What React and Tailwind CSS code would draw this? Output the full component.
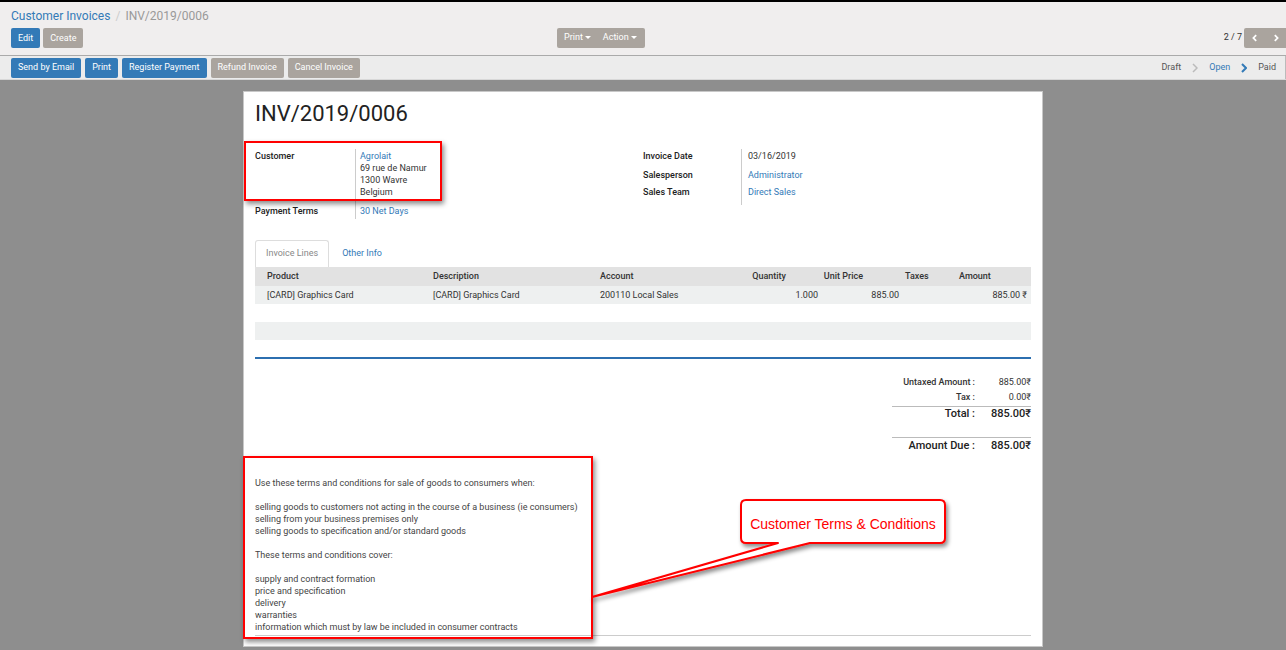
import React from 'react'

const font = { fontFamily: 'Roboto, "Liberation Sans", sans-serif' }

function Btn({ children, primary }) {
  return (
    <button
      className={
        'h-[20px] px-[7px] rounded-[2px] text-[9px] leading-none text-white ' +
        (primary ? 'bg-[#337ab7]' : 'bg-[#aaa49e]')
      }
    >
      {children}
    </button>
  )
}

function Caret() {
  return <span className="inline-block ml-[2px] align-middle border-t-[3px] border-x-[3px] border-x-transparent border-t-white" />
}

function Field({ label, children, className = '' }) {
  return (
    <div className={'flex ' + className}>
      <div className="w-[100px] shrink-0 text-[9px] leading-[12px] font-medium text-[#222]">{label}</div>
      <div className="pl-[5px] text-[9px] leading-[12px] text-[#333]">{children}</div>
    </div>
  )
}

const terms = [
  'Use these terms and conditions for sale of goods to consumers when:',
  '',
  'selling goods to customers not acting in the course of a business (ie consumers)',
  'selling from your business premises only',
  'selling goods to specification and/or standard goods',
  '',
  'These terms and conditions cover:',
  '',
  'supply and contract formation',
  'price and specification',
  'delivery',
  'warranties',
  'information which must by law be included in consumer contracts',
]

export default function App() {
  return (
    <div className="relative w-[1286px] h-[650px] overflow-hidden bg-[#8e8e8e]" style={font}>
      {/* control panel */}
      <div className="border-t-2 border-black bg-[#f0eeee]">
        <div className="px-[11px] pt-[6px] h-[26px] text-[12px] leading-[16px]">
          <span className="text-[#337ab7]">Customer Invoices</span>
          <span className="text-[#ccc] mx-[5px]">/</span>
          <span className="text-[#999]">INV/2019/0006</span>
        </div>
        <div className="flex items-center px-[11px] h-[20px]">
          <div className="flex gap-[3px] w-[546px]">
            <Btn primary>Edit</Btn>
            <Btn>Create</Btn>
          </div>
          <div className="flex h-[20px] rounded-[2px] bg-[#aaa49e] text-[9px] text-white items-center">
            <span className="pl-[7px] pr-[6px]">Print<Caret /></span>
            <span className="px-[6px] pr-[8px]">Action<Caret /></span>
          </div>
          <div className="flex-1" />
          <span className="text-[9px] text-[#333] mr-[2px]">2 / 7</span>
          <div className="flex h-[20px] w-[42px] -mr-[11px] rounded-l-[2px] bg-[#aaa49e] items-center justify-around text-white">
            <svg width="8" height="8" viewBox="0 0 10 10"><path d="M6.5 1.5 3 5l3.5 3.5" fill="none" stroke="white" strokeWidth="2.2" /></svg>
            <svg width="8" height="8" viewBox="0 0 10 10"><path d="M3.5 1.5 7 5 3.5 8.5" fill="none" stroke="white" strokeWidth="2.2" /></svg>
          </div>
        </div>
        <div className="h-[7px]" />
      </div>
      <div className="h-[25px] border-t border-[#aaa] border-b border-b-[#d8d8d8] bg-[#ececec] flex items-center pl-[11px]">
        <div className="flex gap-[4px]">
          <Btn primary>Send by Email</Btn>
          <Btn primary>Print</Btn>
          <Btn primary>Register Payment</Btn>
          <Btn>Refund Invoice</Btn>
          <Btn>Cancel Invoice</Btn>
        </div>
        <div className="flex-1" />
        <div className="flex items-center h-full text-[9px] border-r border-[#bbb] pr-[9px]">
          <span className="text-[#555]">Draft</span>
          <svg className="mx-[11px]" width="6" height="10" viewBox="0 0 6 10"><path d="M1 1l4 4-4 4" fill="none" stroke="#bbb" strokeWidth="1.5" /></svg>
          <span className="text-[#337ab7]">Open</span>
          <svg className="mx-[11px]" width="6" height="10" viewBox="0 0 6 10"><path d="M1 1l4 4-4 4" fill="none" stroke="#337ab7" strokeWidth="2" /></svg>
          <span className="text-[#555]">Paid</span>
        </div>
      </div>

      {/* sheet */}
      <div className="pt-[11px] flex justify-center">
        <div className="w-[800px] bg-white border border-[#c8c8c8] px-[11px] pt-[10px] pb-[10px]">
          <h1 className="text-[22px] leading-[24px] text-[#222]">INV/2019/0006</h1>

          <div className="grid grid-cols-2 mt-[23px]">
            <div className="relative">
              <div className="absolute left-[100px] top-0 h-[70px] border-l border-[#ccc]" />
              <Field label="Customer" className="pt-[1px]">
                <div className="text-[#337ab7]">Agrolait</div>
                <div>69 rue de Namur</div>
                <div>1300 Wavre</div>
                <div>Belgium</div>
              </Field>
              <Field label="Payment Terms" className="mt-[7px]">
                <span className="text-[#337ab7]">30 Net Days</span>
              </Field>
            </div>
            <div className="relative">
              <div className="absolute left-[98px] top-0 h-[56px] border-l border-[#ccc]" />
              <Field label="Invoice Date" className="pt-[1px]">03/16/2019</Field>
              <Field label="Salesperson" className="mt-[7px]">
                <span className="text-[#337ab7]">Administrator</span>
              </Field>
              <Field label="Sales Team" className="mt-[5px]">
                <span className="text-[#337ab7]">Direct Sales</span>
              </Field>
            </div>
          </div>

          {/* tabs */}
          <div className="mt-[23px] flex text-[9px] h-[27px]">
            <div className="px-[10px] border border-b-0 border-[#ddd] rounded-t-[3px] text-[#888] flex items-center">Invoice Lines</div>
            <div className="px-[13px] text-[#337ab7] flex items-center">Other Info</div>
          </div>
          <div className="text-[9px] leading-[18px] whitespace-nowrap">
            <div className="grid grid-cols-[178px_167px_140px_82px_81px_52px_1fr] bg-[#e2e2e2] font-medium text-[#333] h-[19px]">
              <div className="pl-[12px]">Product</div>
              <div>Description</div>
              <div>Account</div>
              <div className="text-right pr-[36px]">Quantity</div>
              <div className="text-right pr-[40px]">Unit Price</div>
              <div className="pl-[2px]">Taxes</div>
              <div className="pl-[4px]">Amount</div>
            </div>
            <div className="grid grid-cols-[178px_167px_140px_82px_81px_52px_1fr] bg-[#eef0f0] text-[#333] h-[18px]">
              <div className="pl-[12px]">[CARD] Graphics Card</div>
              <div>[CARD] Graphics Card</div>
              <div>200110 Local Sales</div>
              <div className="text-right pr-[4px]">1.000</div>
              <div className="text-right pr-[4px]">885.00</div>
              <div />
              <div className="text-right pr-[4px]">885.00 ₹</div>
            </div>
            <div className="h-[18px]" />
            <div className="h-[18px] bg-[#eef0f0]" />
          </div>
          <div className="mt-[17px] border-t-2 border-[#2c6fb0]" />

          {/* totals */}
          <div className="flex justify-end mt-[16px]">
            <div className="w-[139px] text-[#333]">
              <div className="grid grid-cols-[87px_52px] text-[9px] leading-[15px] font-medium">
                <div className="text-right pr-[4px]">Untaxed Amount :</div>
                <div className="text-right font-normal">885.00₹</div>
                <div className="text-right pr-[4px]">Tax :</div>
                <div className="text-right font-normal">0.00₹</div>
              </div>
              <div className="border-t border-[#bbb] mt-[1px] grid grid-cols-[87px_52px] text-[11px] leading-[14px] font-medium text-[#222]">
                <div className="text-right pr-[4px]">Total :</div>
                <div className="text-right">885.00₹</div>
              </div>
              <div className="mt-[16px] border-t border-[#bbb] grid grid-cols-[87px_52px] text-[11px] leading-[16px] font-medium text-[#222]">
                <div className="text-right pr-[4px]">Amount Due :</div>
                <div className="text-right">885.00₹</div>
              </div>
            </div>
          </div>

          {/* terms */}
          <div className="mt-[23px] pb-[2px] border-b border-[#ccc] text-[9px] leading-[12px] text-[#444]">
            {terms.map((t, i) => (
              <div key={i} className="h-[12px]">{t}</div>
            ))}
          </div>
        </div>
      </div>

      {/* annotations */}
      <div className="absolute left-[244px] top-[141px] w-[198px] h-[60px] border-[2.5px] border-[#f00] shadow-[2px_3px_5px_rgba(0,0,0,0.45)]" />
      <div className="absolute left-[243px] top-[456px] w-[350px] h-[183px] border-[2.5px] border-[#f00] shadow-[2px_3px_5px_rgba(0,0,0,0.45)]" />
      <svg className="absolute left-0 top-0 pointer-events-none" width="1286" height="650">
        <defs>
          <filter id="sh" x="-10%" y="-10%" width="130%" height="140%">
            <feDropShadow dx="2" dy="3" stdDeviation="2" floodColor="#000" floodOpacity="0.45" />
          </filter>
        </defs>
        <path
          d="M746 500 H940 Q945 500 945 505 V538 Q945 543 940 543 H810 L592 597 L778 543 H746 Q741 543 741 538 V505 Q741 500 746 500 Z"
          fill="white"
          stroke="#f00"
          strokeWidth="2"
          strokeLinejoin="round"
          filter="url(#sh)"
        />
      </svg>
      <div
        className="absolute left-[741px] top-[500px] w-[204px] h-[43px] pt-[5px] flex items-center justify-center text-[14px] text-[#f00]"
        style={{ fontFamily: '"Liberation Sans", Arial, sans-serif' }}
      >
        Customer Terms &amp; Conditions
      </div>
    </div>
  )
}
